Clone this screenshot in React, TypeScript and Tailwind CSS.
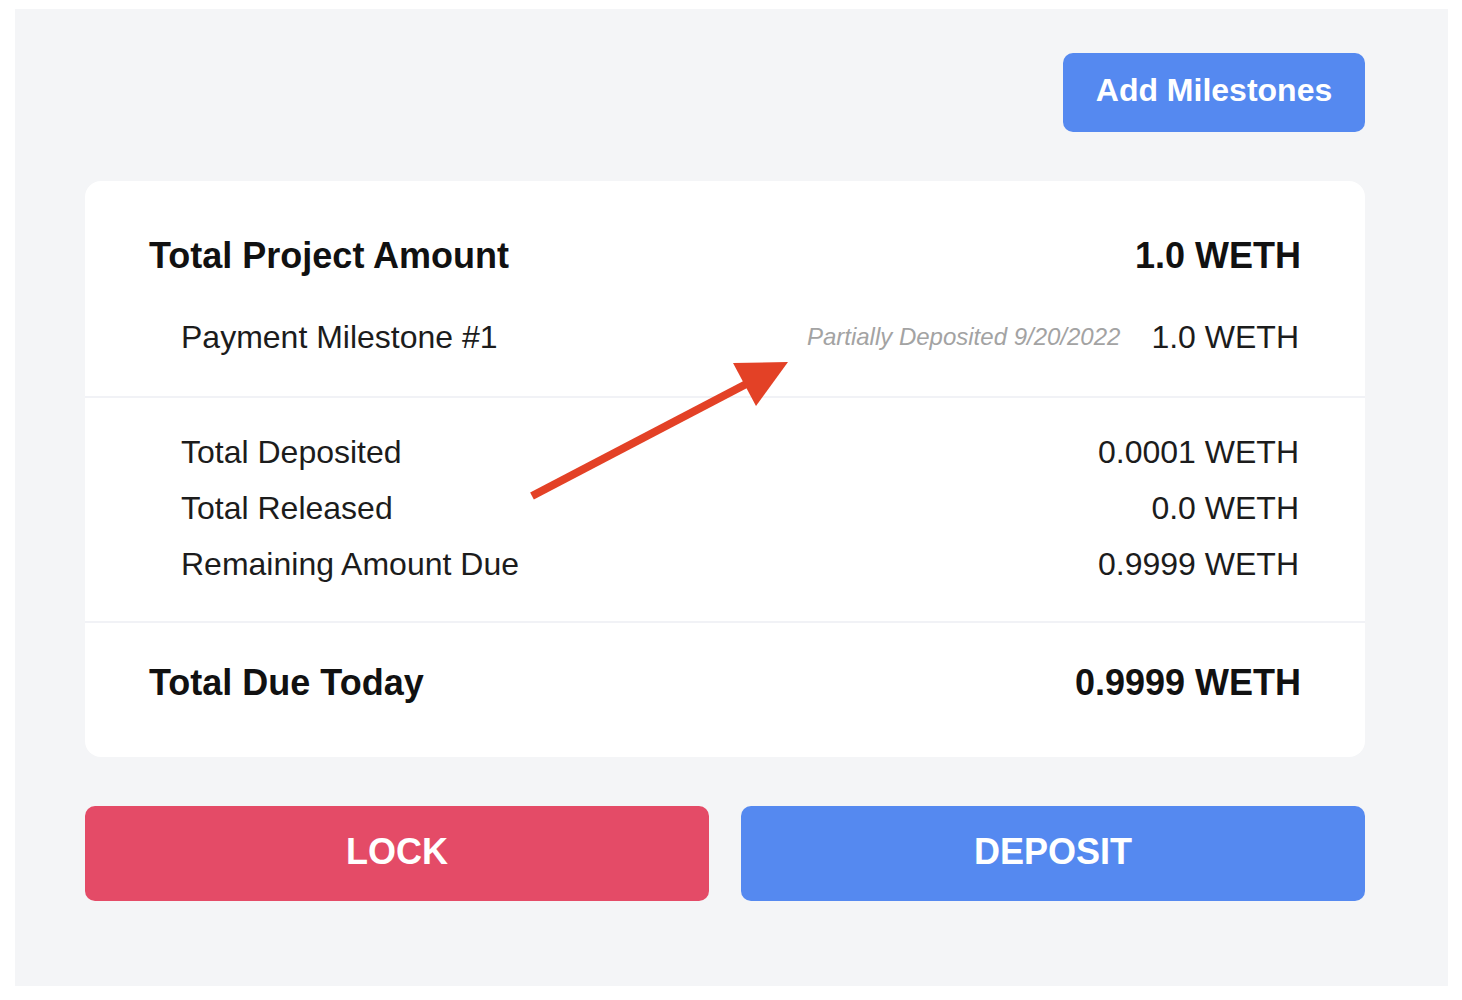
import React from "react";

function Row({ label, value, note, bold }: { label: string; value: string; note?: string; bold?: boolean }) {
  return (
    <div className={bold ? "flex items-center justify-between h-[56px] px-[64px]" : "flex items-center justify-between h-[56px] pl-[96px] pr-[66px]"}>
      <span className={bold ? "text-[36px] font-bold text-[#111111]" : "text-[32px] text-[#1c1c1c]"}>{label}</span>
      <div className="flex items-center">
        {note && <span className="text-[24px] italic text-[#a3a3a3] mr-[31px]">{note}</span>}
        <span className={bold ? "text-[36px] font-bold text-[#111111]" : "text-[32px] text-[#1c1c1c]"}>{value}</span>
      </div>
    </div>
  );
}

export default function App() {
  return (
    <div className="w-[1462px] h-[1000px] bg-white pt-[9px] pl-[15px]" style={{ fontFamily: '"Liberation Sans", Arial, Helvetica, sans-serif' }}>
      <div className="w-[1433px] h-[977px] bg-[#f4f5f7] pl-[70px] pt-[44px]">
        <div className="w-[1280px] flex flex-col">
          <div className="flex justify-end">
            <button className="w-[302px] h-[79px] pb-[5px] rounded-[10px] bg-[#5589f0] text-white text-[32px] font-bold">Add Milestones</button>
          </div>
          <div className="relative mt-[49px] bg-white rounded-[16px] w-[1280px]">
            <div className="pt-[47px] pb-[31px]">
              <Row label="Total Project Amount" value="1.0 WETH" bold />
              <div className="h-[25px]" />
              <Row label="Payment Milestone #1" value="1.0 WETH" note="Partially Deposited 9/20/2022" />
            </div>
            <div className="h-[2px] bg-[#f1f2f6]" />
            <div className="pt-[26px] pb-[29px]">
              <Row label="Total Deposited" value="0.0001 WETH" />
              <Row label="Total Released" value="0.0 WETH" />
              <Row label="Remaining Amount Due" value="0.9999 WETH" />
            </div>
            <div className="h-[2px] bg-[#f1f2f6]" />
            <div className="pt-[32px] pb-[46px]">
              <Row label="Total Due Today" value="0.9999 WETH" bold />
            </div>
            <svg className="absolute left-0 top-0 pointer-events-none" width="1280" height="575" viewBox="0 0 1280 575">
              <g transform="translate(-85,-181)">
                <line x1="532" y1="496" x2="752" y2="381" stroke="#e34126" strokeWidth="8" strokeLinecap="butt" />
                <polygon points="733,363 788,362 756,406" fill="#e34126" />
              </g>
            </svg>
          </div>
          <div className="flex gap-[32px] mt-[49px]">
            <button className="flex-1 h-[95px] pb-[4px] rounded-[10px] bg-[#e44b67] text-white text-[36px] font-bold">LOCK</button>
            <button className="flex-1 h-[95px] pb-[4px] rounded-[10px] bg-[#5589f0] text-white text-[36px] font-bold">DEPOSIT</button>
          </div>
        </div>
      </div>
    </div>
  );
}
